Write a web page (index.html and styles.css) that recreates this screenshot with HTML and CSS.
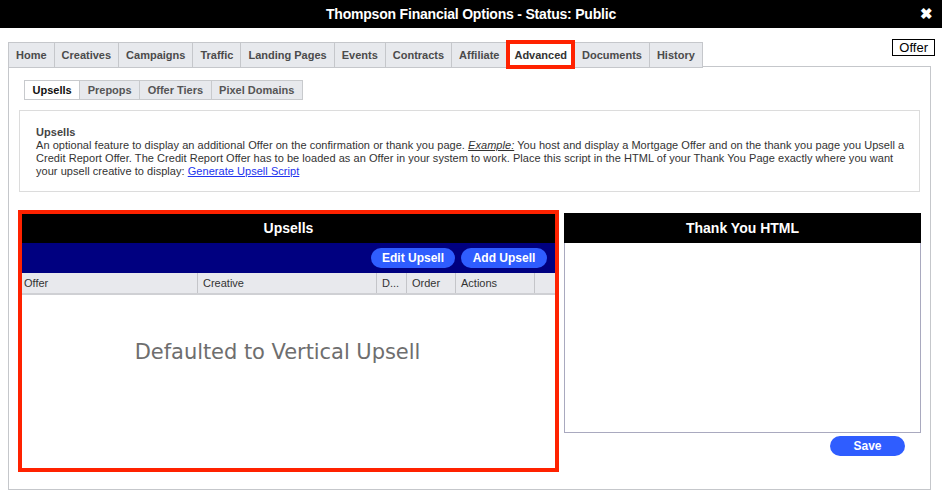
FILE: index.html
```html
<!DOCTYPE html>
<html>
<head>
<meta charset="utf-8">
<link rel="stylesheet" href="styles.css">
</head>
<body>
<div class="titlebar">
  <span class="title">Thompson Financial Options - Status: Public</span>
  <span class="close">&#10006;</span>
</div>
<div class="main">
  <div class="tabrow">
    <div class="tabs">
      <div class="tab">Home</div>
      <div class="tab">Creatives</div>
      <div class="tab">Campaigns</div>
      <div class="tab">Traffic</div>
      <div class="tab">Landing Pages</div>
      <div class="tab">Events</div>
      <div class="tab">Contracts</div>
      <div class="tab">Affiliate</div>
      <div class="tab active highlight">Advanced</div>
      <div class="tab">Documents</div>
      <div class="tab">History</div>
    </div>
    <div class="offer">Offer</div>
  </div>
  <div class="panel">
    <div class="subtabs">
      <div class="subtab active">Upsells</div>
      <div class="subtab">Prepops</div>
      <div class="subtab">Offer Tiers</div>
      <div class="subtab">Pixel Domains</div>
    </div>
    <div class="info">
      <div class="info-title">Upsells</div>
      <p class="info-text">An optional feature to display an additional Offer on the confirmation or thank you page. <em class="example">Example:</em> You host and display a Mortgage Offer and on the thank you page you Upsell a Credit Report Offer. The Credit Report Offer has to be loaded as an Offer in your system to work. Place this script in the HTML of your Thank You Page exactly where you want your upsell creative to display: <a class="link" href="#">Generate Upsell Script</a></p>
    </div>
    <div class="bottom">
      <div class="upsells">
        <div class="box-head">Upsells</div>
        <div class="toolbar">
          <button class="btn">Edit Upsell</button>
          <button class="btn btn-add">Add Upsell</button>
        </div>
        <div class="thead">
          <div class="th c-offer">Offer</div>
          <div class="th c-creative">Creative</div>
          <div class="th c-d">D...</div>
          <div class="th c-order">Order</div>
          <div class="th c-actions">Actions</div>
        </div>
        <div class="empty">
          <div class="empty-text">Defaulted to Vertical Upsell</div>
        </div>
      </div>
      <div class="thankyou">
        <div class="box-head ty-head">Thank You HTML</div>
        <div class="textarea"></div>
        <div class="save-row"><button class="btn save">Save</button></div>
      </div>
    </div>
  </div>
</div>
</body>
</html>
```
FILE: styles.css
```css
* { box-sizing: border-box; }
body {
  margin: 0;
  font-family: "Liberation Sans", Arial, sans-serif;
  background: #fff;
  width: 942px;
  height: 504px;
  overflow: hidden;
}
.titlebar {
  height: 28px;
  background: #000;
  color: #fff;
  display: flex;
  align-items: center;
  justify-content: center;
  position: relative;
}
.title {
  font-weight: bold;
  font-size: 14px;
  letter-spacing: -0.2px;
}
.close {
  position: absolute;
  right: 9px;
  top: 5px;
  font-size: 15px;
  font-weight: bold;
}
.main {
  padding: 11px 7px 0 8px;
}
.tabrow {
  display: flex;
  justify-content: space-between;
  align-items: flex-start;
  height: 29px;
}
.tabs {
  display: flex;
  margin-top: 3px;
  border-left: 1px solid #c5c7cb;
  position: relative;
  z-index: 1;
}
.tab {
  height: 26px;
  line-height: 25px;
  padding: 0 7px;
  background: #e7e9ed;
  border: 1px solid #c5c7cb;
  border-left: none;
  font-size: 11px;
  font-weight: bold;
  color: #4b4b4b;
  position: relative;
}
.tab.active {
  background: #fff;
  color: #333;
  border-bottom-color: #fff;
}
.tab.highlight::after {
  content: "";
  position: absolute;
  left: -1px;
  top: -3px;
  right: -1px;
  bottom: -2px;
  border: 4px solid #ff2200;
}
.offer {
  border: 1px solid #000;
  font-size: 13px;
  padding: 0 6px;
  line-height: 15px;
  color: #000;
}
.panel {
  border: 1px solid #c5c7cb;
  margin-top: -2px;
  width: 923px;
  padding: 13px 10px 17px 10px;
}
.subtabs {
  display: flex;
  margin-left: 5px;
  border-left: 1px solid #c8cacd;
}
.subtab {
  height: 20px;
  line-height: 18px;
  padding: 0 7.5px;
  background: #e7e9ed;
  border: 1px solid #c8cacd;
  border-left: none;
  font-size: 11px;
  font-weight: bold;
  color: #555;
}
.subtab.active {
  background: #fff;
  color: #111;
}
.info {
  margin-top: 10px;
  border: 1px solid #dcdcdc;
  padding: 15px 12px 13px 16px;
  font-size: 11px;
  line-height: 13px;
  color: #333;
  letter-spacing: 0.04px;
}
.info-title {
  font-weight: bold;
  color: #444;
}
.info-text {
  margin: 0;
}
.example {
  font-style: italic;
  text-decoration: underline;
}
.link {
  color: #2233ee;
  text-decoration: underline;
}
.bottom {
  display: flex;
  margin-top: 18px;
  margin-left: -1px;
  margin-right: -2px;
  gap: 5px;
}
.upsells {
  flex: 0 0 541px;
  height: 262px;
  border: 4px solid #ff2200;
  display: flex;
  flex-direction: column;
}
.box-head {
  background: #000;
  color: #fff;
  font-weight: bold;
  font-size: 14px;
  text-align: center;
  height: 29px;
  line-height: 29px;
}
.toolbar {
  background: #000080;
  height: 30px;
  display: flex;
  justify-content: flex-end;
  align-items: center;
  gap: 6px;
  padding-right: 8px;
}
.btn {
  border: none;
  background: #2f5dff;
  color: #fff;
  font-family: "Liberation Sans", Arial, sans-serif;
  font-weight: bold;
  font-size: 12px;
  height: 20px;
  border-radius: 10px;
  padding: 0;
  width: 84px;
}
.btn-add { width: 86px; }
.thead {
  display: flex;
  height: 22px;
  background: #e8e9ed;
  border-bottom: 2px solid #cfd0d4;
}
.th {
  font-size: 11px;
  color: #333;
  line-height: 21px;
  padding-left: 2px;
  border-right: 1px solid #c4c5c9;
  white-space: nowrap;
  overflow: hidden;
}
.c-offer { width: 176px; }
.c-creative { width: 179px; padding-left: 5px; }
.c-d { width: 30px; padding-left: 5px; }
.c-order { width: 49px; padding-left: 5px; }
.c-actions { width: 79px; padding-left: 5px; }
.empty {
  flex: 1;
  display: flex;
  justify-content: center;
  padding-right: 22px;
  padding-top: 45px;
}
.empty-text {
  font-family: "DejaVu Sans", sans-serif;
  font-size: 21px;
  color: #6e6e6e;
  letter-spacing: -0.05px;
}
.thankyou {
  flex: 0 0 357px;
  margin-top: 3px;
  display: flex;
  flex-direction: column;
}
.ty-head {
  height: 30px;
  line-height: 30px;
}
.textarea {
  height: 190px;
  border: 1px solid #a9a9bf;
  border-top: none;
}
.save-row {
  display: flex;
  justify-content: flex-end;
  padding-right: 16px;
  margin-top: 3px;
}
.save {
  width: 75px;
}
```
